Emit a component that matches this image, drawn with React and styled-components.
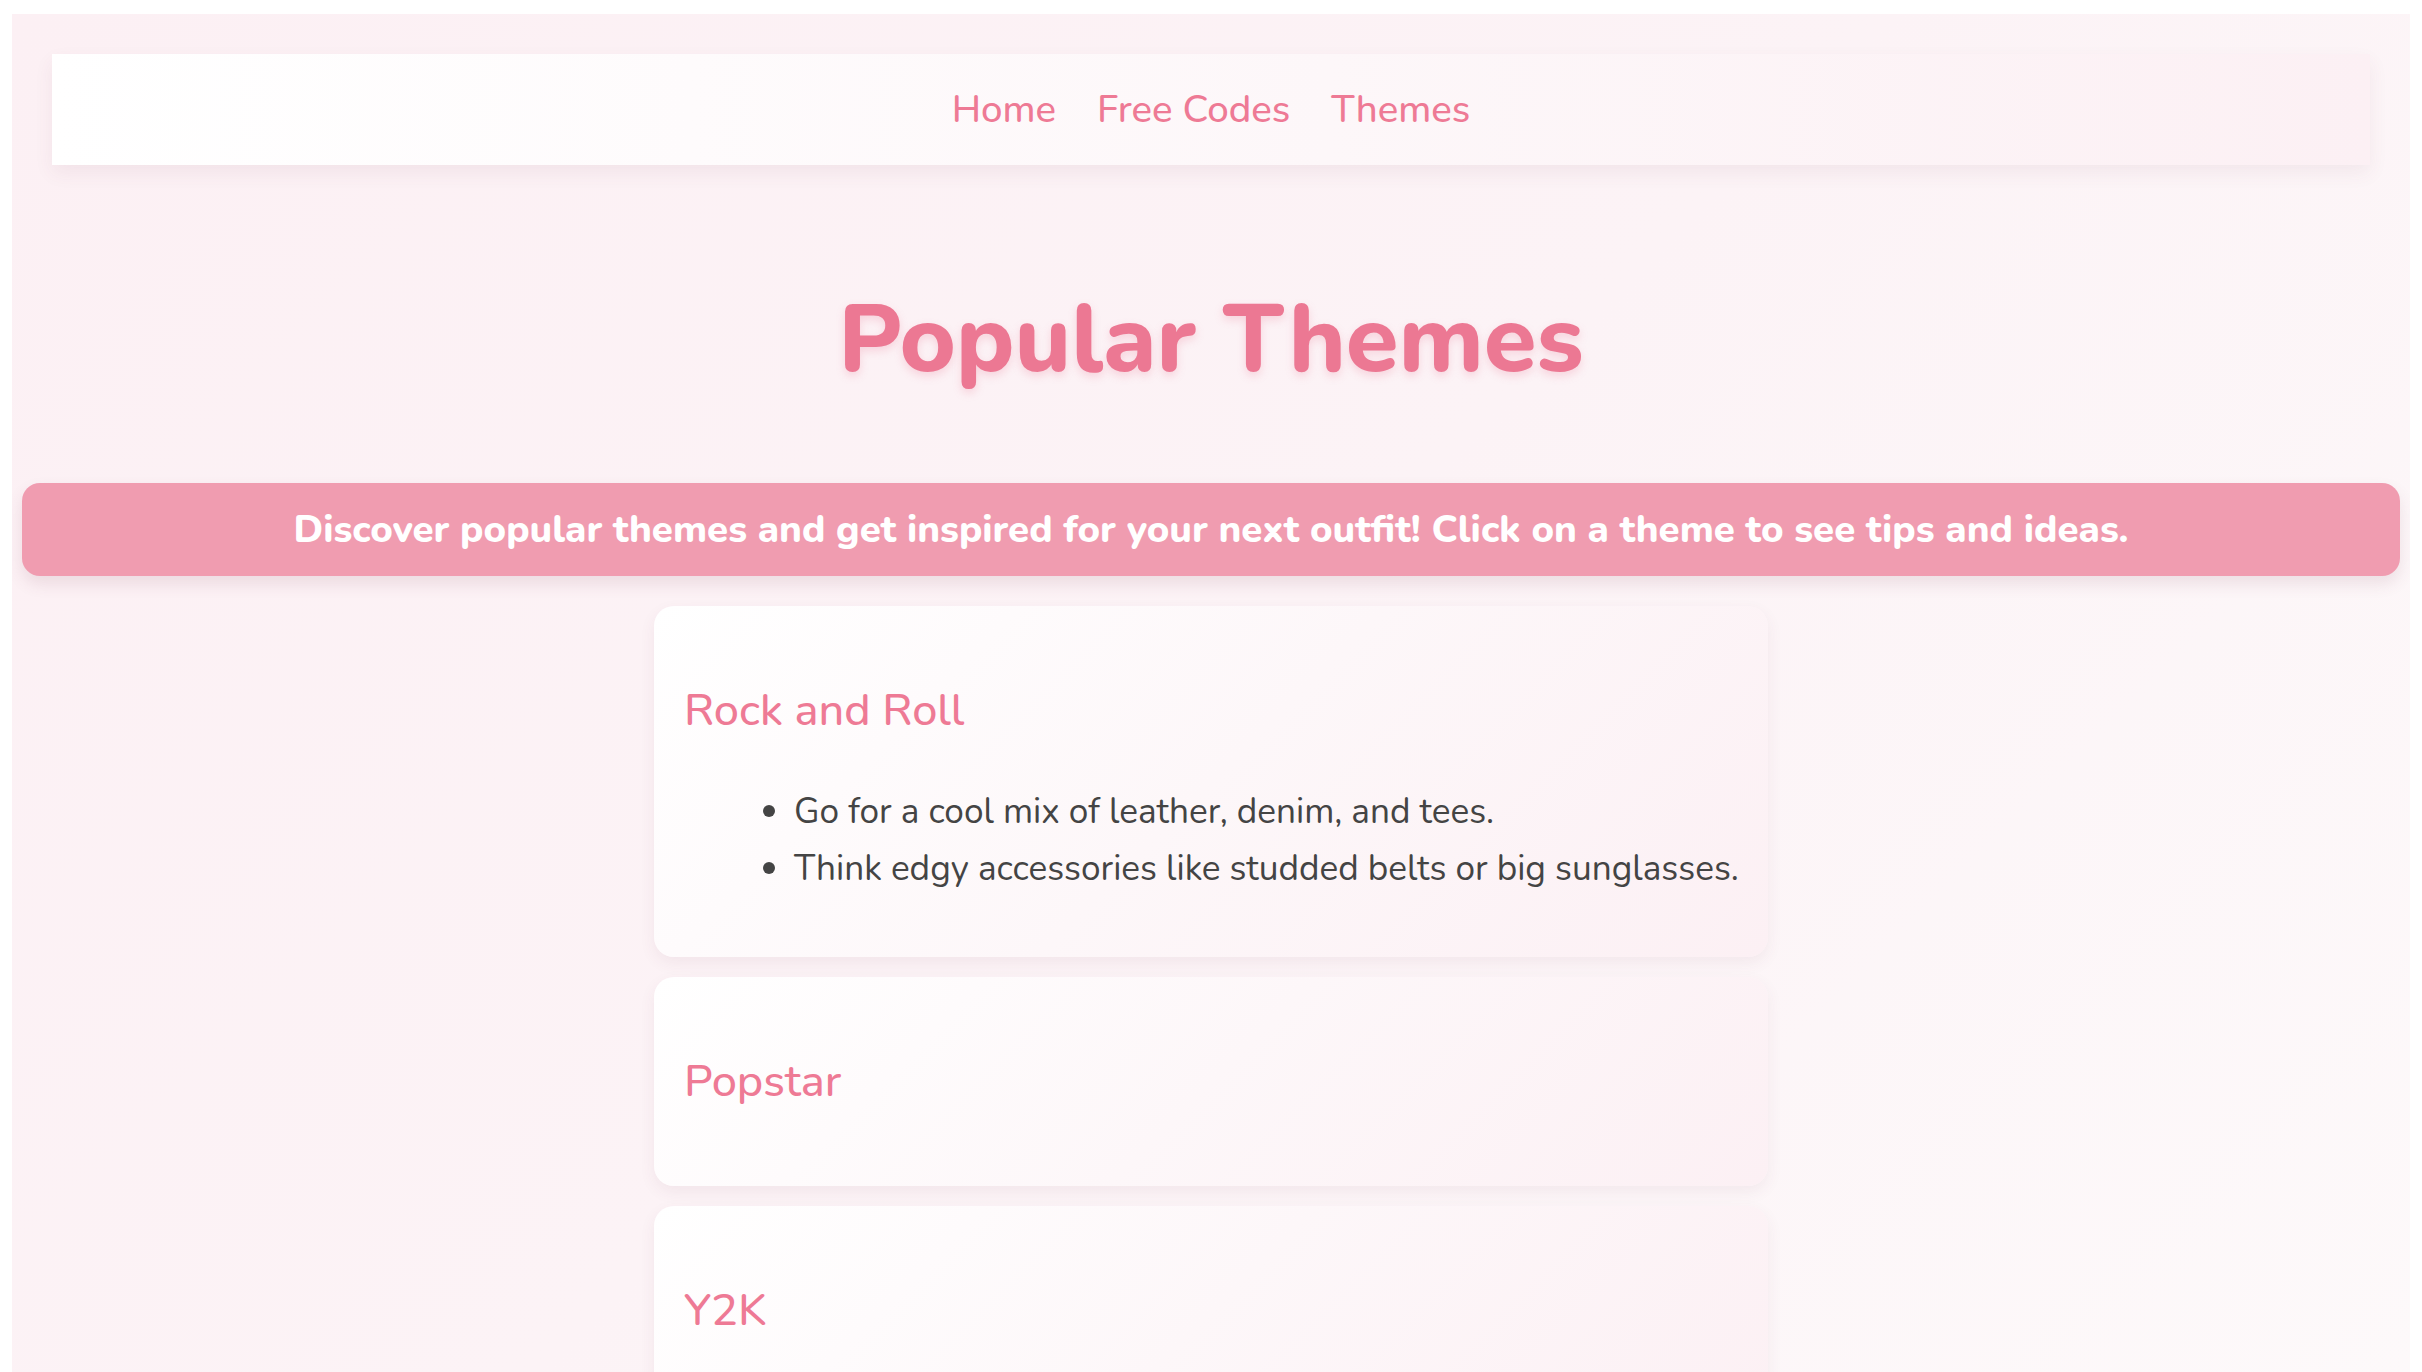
import React from "react";
import styled, { createGlobalStyle } from "styled-components";

const GlobalStyle = createGlobalStyle`
  html, body {
    margin: 0;
    padding: 0;
    background: #ffffff;
  }
  body {
    font-family: "Nunito", "Lato", "Open Sans", sans-serif;
  }
`;

const Frame = styled.div`
  padding: 14px 12px 0 12px;
  height: 1372px;
  box-sizing: border-box;
  overflow: hidden;
`;

const Page = styled.main`
  height: 100%;
  background: linear-gradient(135deg, #fcf0f4 0%, #fcf3f6 50%, #fdf9fa 100%);
  overflow: hidden;
`;

const NavBar = styled.nav`
  margin: 40px 40px 0;
  height: 111px;
  display: flex;
  justify-content: center;
  align-items: center;
  gap: 41px;
  background: linear-gradient(90deg, #ffffff 0%, #fdf7f9 55%, #fcf0f4 100%);
  box-shadow: 0 8px 18px rgba(120, 60, 80, 0.07);
`;

const NavLink = styled.a`
  color: #ee7a95;
  font-size: 38.4px;
  font-weight: 500;
  text-decoration: none;
  cursor: pointer;
`;

const Title = styled.h1`
  margin: 109px 0 78px;
  line-height: 131px;
  font-size: 96px;
  font-weight: 800;
  text-align: center;
  color: #ec7893;
  text-shadow: 0 4px 8px rgba(236, 120, 147, 0.25);
`;

const Banner = styled.p`
  margin: 0 10px;
  padding: 24px;
  line-height: 45px;
  font-size: 38.4px;
  font-weight: 800;
  text-align: center;
  color: #ffffff;
  background: #f09cb0;
  border-radius: 18px;
  box-shadow: 0 8px 16px rgba(120, 60, 80, 0.12);
`;

const List = styled.section`
  width: 1114px;
  margin: 30px auto 0;
  display: flex;
  flex-direction: column;
  gap: 20px;
`;

const Card = styled.article`
  padding: 32px 30px;
  border-radius: 20px;
  background: linear-gradient(135deg, #ffffff 0%, #fdf7f9 50%, #fcf0f4 100%);
  box-shadow: 0 6px 16px rgba(120, 60, 80, 0.07);
`;

const CardTitle = styled.h2`
  margin: 40px 0;
  font-size: 45px;
  line-height: 65px;
  font-weight: 500;
  color: #ee7a95;
`;

const Tips = styled.ul`
  margin: 0 0 28px;
  padding-left: 110px;
  color: #444444;
  font-size: 35.2px;
  line-height: 57px;

  li {
    white-space: nowrap;
  }
`;

const themes = [
  {
    name: "Rock and Roll",
    tips: [
      "Go for a cool mix of leather, denim, and tees.",
      "Think edgy accessories like studded belts or big sunglasses.",
    ],
  },
  { name: "Popstar", tips: [] },
  { name: "Y2K", tips: [] },
];

export default function App() {
  return (
    <>
      <GlobalStyle />
      <Frame>
        <Page>
          <NavBar>
            <NavLink>Home</NavLink>
            <NavLink>Free Codes</NavLink>
            <NavLink>Themes</NavLink>
          </NavBar>
          <Title>Popular Themes</Title>
          <Banner>
            Discover popular themes and get inspired for your next outfit! Click on a theme to see tips and ideas.
          </Banner>
          <List>
            {themes.map((t) => (
              <Card key={t.name}>
                <CardTitle>{t.name}</CardTitle>
                {t.tips.length > 0 && (
                  <Tips>
                    {t.tips.map((tip) => (
                      <li key={tip}>{tip}</li>
                    ))}
                  </Tips>
                )}
              </Card>
            ))}
          </List>
        </Page>
      </Frame>
    </>
  );
}
